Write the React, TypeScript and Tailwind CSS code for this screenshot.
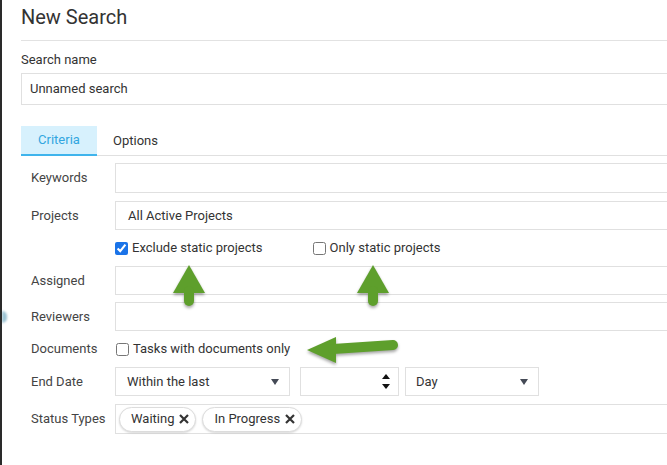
function UpArrow({ left }: { left: string }) {
  return (
    <svg
      className={`absolute top-[264px] ${left} drop-shadow-[0_2px_1.5px_rgba(0,0,0,0.35)]`}
      width="34"
      height="42"
      viewBox="0 0 34 42"
    >
      <polygon points="17,1 1,29 33,29" fill="#5e9f2c" />
      <line x1="17" y1="27" x2="17" y2="37" stroke="#5e9f2c" strokeWidth="10" strokeLinecap="round" />
    </svg>
  )
}

function LeftArrow() {
  return (
    <svg
      className="absolute left-[303px] top-[334px] drop-shadow-[0_2px_1.5px_rgba(0,0,0,0.35)]"
      width="98"
      height="34"
      viewBox="0 0 98 34"
    >
      <polygon points="2,16 31,3 31,29" fill="#5e9f2c" />
      <line x1="28" y1="15" x2="88" y2="11" stroke="#5e9f2c" strokeWidth="10" strokeLinecap="round" />
    </svg>
  )
}

function Caret() {
  return (
    <svg width="8" height="6" viewBox="0 0 8 6" className="shrink-0">
      <polygon points="0,0 8,0 4,6" fill="#454a56" />
    </svg>
  )
}

function Chip({ label }: { label: string }) {
  return (
    <div className="flex h-[25px] items-center gap-[5px] rounded-full border border-[#dcdcdc] bg-white pl-[11px] pr-[6px] shadow-[0_1px_2px_rgba(0,0,0,0.15)]">
      <span>{label}</span>
      <svg width="10" height="10" viewBox="0 0 10 10">
        <path d="M1 1 L9 9 M9 1 L1 9" stroke="#333" strokeWidth="2.2" />
      </svg>
    </div>
  )
}

function Row({ label, children, className = '' }: { label?: string; children: React.ReactNode; className?: string }) {
  return (
    <div className={`flex items-center ${className}`}>
      <div className="w-[94px] shrink-0 pl-[10px] text-[#444]">{label}</div>
      <div className="flex h-full min-w-0 flex-1 items-center">{children}</div>
    </div>
  )
}

const box = 'h-full flex-1 border border-[#e0e0e0] bg-white flex items-center pl-[12px]'

export default function App() {
  return (
    <div
      className="relative h-[465px] w-[667px] overflow-hidden border-l-2 border-[#2a2a2a] bg-white text-[13px] text-[#333]"
      style={{ fontFamily: 'Roboto, "Noto Sans", sans-serif' }}
    >
      <div className="w-[700px] pl-[19px]">
        <div className="h-[41px] border-b border-[#e2e2e2] pt-[5px] text-[20px] leading-[24px] text-[#333]">
          New Search
        </div>

        <div className="mt-[11px] leading-[16px]">Search name</div>
        <div className="mt-[5px] flex h-[32px] items-center border border-[#e0e0e0] pl-[8px]">Unnamed search</div>

        <div className="mt-[21px] flex h-[30px] border-b border-[#e0e0e0]">
          <div className="-mb-px flex w-[76px] items-center justify-center border-b-2 border-[#3fb4ec] bg-[#d7f1fd] text-[#32a6e0]">
            Criteria
          </div>
          <div className="flex items-center pl-[16px]">Options</div>
        </div>

        <Row label="Keywords" className="mt-[7px] h-[30px]">
          <div className={box} />
        </Row>
        <Row label="Projects" className="mt-[8px] h-[29px]">
          <div className={box}>All Active Projects</div>
        </Row>
        <Row className="h-[36px]">
          <label className="flex items-center gap-[4px]">
            <input type="checkbox" defaultChecked className="m-0 h-[13px] w-[13px] accent-[#1a73e8]" />
            <span>Exclude static projects</span>
          </label>
          <label className="ml-[50px] flex items-center gap-[4px]">
            <input type="checkbox" className="m-0 h-[13px] w-[13px]" />
            <span>Only static projects</span>
          </label>
        </Row>
        <Row label="Assigned" className="h-[29px]">
          <div className={box} />
        </Row>
        <Row label="Reviewers" className="mt-[7px] h-[29px]">
          <div className={box} />
        </Row>
        <Row label="Documents" className="h-[36px]">
          <label className="flex items-center gap-[4px] pl-[1px]">
            <input type="checkbox" className="m-0 h-[13px] w-[13px]" />
            <span>Tasks with documents only</span>
          </label>
        </Row>
        <Row label="End Date" className="h-[29px]">
          <div className="flex h-full w-[175px] items-center justify-between border border-[#e0e0e0] pl-[11px] pr-[10px]">
            <span>Within the last</span>
            <Caret />
          </div>
          <div className="ml-[10px] flex h-full w-[99px] items-center justify-end border border-[#e0e0e0] pr-[8px]">
            <div className="flex flex-col gap-[5px]">
              <svg width="8" height="5" viewBox="0 0 8 5">
                <polygon points="4,0 8,5 0,5" fill="#111" />
              </svg>
              <svg width="8" height="5" viewBox="0 0 8 5">
                <polygon points="0,0 8,0 4,5" fill="#111" />
              </svg>
            </div>
          </div>
          <div className="ml-[6px] flex h-full w-[134px] items-center justify-between border border-[#e0e0e0] pl-[10px] pr-[10px]">
            <span>Day</span>
            <Caret />
          </div>
        </Row>
        <Row label="Status Types" className="mt-[8px] h-[30px]">
          <div className="flex h-full flex-1 items-center gap-[6px] border border-[#e0e0e0] pl-[3px]">
            <Chip label="Waiting" />
            <Chip label="In Progress" />
          </div>
        </Row>
      </div>

      <UpArrow left="left-[170px]" />
      <UpArrow left="left-[354px]" />
      <LeftArrow />
      <div className="absolute left-0 top-[311px] h-[12px] w-[5px] rounded-r-full bg-[#9cc3d3] blur-[1px]" />
    </div>
  )
}
